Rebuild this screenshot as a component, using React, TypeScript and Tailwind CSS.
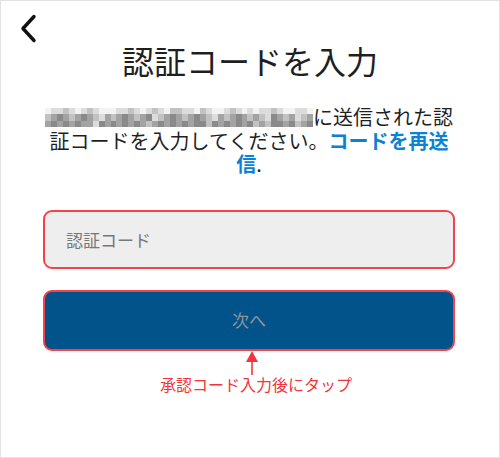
const shades = [
  "bg-[#f3f3f3]",
  "bg-[#dcdcdc]",
  "bg-[#c2c2c2]",
  "bg-[#a3a3a3]",
  "bg-[#8a8a8a]",
];

// pixelated (blurred) email address
const mosaic = [
  "011210121000112101210221102100121010112100110",
  "234323432132343234123432343213234323214323123",
  "343434331434343432343434344243434342324434234",
];

function Mosaic() {
  return (
    <span className="relative top-[3px] inline-grid h-[19px] w-[268px] grid-cols-[repeat(45,1fr)] align-top">
      {mosaic.flatMap((row, r) =>
        row.split("").map((c, i) => <span key={`${r}-${i}`} className={shades[Number(c)]} />)
      )}
    </span>
  );
}

export default function App() {
  return (
    <div className="h-[458px] w-[500px] border border-[#e2e2e2] bg-white font-['Noto_Sans_CJK_JP',sans-serif] text-[#1f1f1f]">
      <div className="h-[39px] pl-[18px] pt-[13px]">
        <svg width="18" height="29" viewBox="0 0 18 29" fill="none">
          <path d="M15 2.5 L4 14.5 L15 26.5" stroke="#111" strokeWidth="3.4" strokeLinecap="round" strokeLinejoin="round" />
        </svg>
      </div>

      <h1 className="text-center text-[32px] leading-[40px] font-normal">認証コードを入力</h1>

      <div className="mt-[25px] pl-[42px]">
        <p className="w-[412px] text-center text-[20px] leading-[23.5px]">
          <Mosaic />に送信された認証コードを入力してください。
          <span className="font-bold text-[#0b82d4]">コードを再送信</span>.
        </p>

        <input
          readOnly
          placeholder="認証コード"
          className="mt-[34px] block h-[59px] w-[412px] rounded-[9px] border-2 border-[#f2444a] bg-[#eeeeee] px-[21px] text-[17px] outline-none placeholder:text-[#777]"
        />

        <button className="mt-[21px] flex h-[61px] w-[412px] items-center justify-center rounded-[9px] border-2 border-[#f2444a] bg-[#02538a] text-[17px] text-[#8d939a]">
          次へ
        </button>

        <div className="flex w-[412px] flex-col items-center">
          <svg width="14" height="24" viewBox="0 0 14 24" className="ml-[6px]">
            <path d="M7 0 L13 11 L1 11 Z" fill="#f2343c" />
            <line x1="7" y1="10" x2="7" y2="24" stroke="#f2343c" strokeWidth="1.6" />
          </svg>
          <p className="pl-[14px] text-[16px] leading-[18px] text-[#f2343c]">承認コード入力後にタップ</p>
        </div>
      </div>
    </div>
  );
}
